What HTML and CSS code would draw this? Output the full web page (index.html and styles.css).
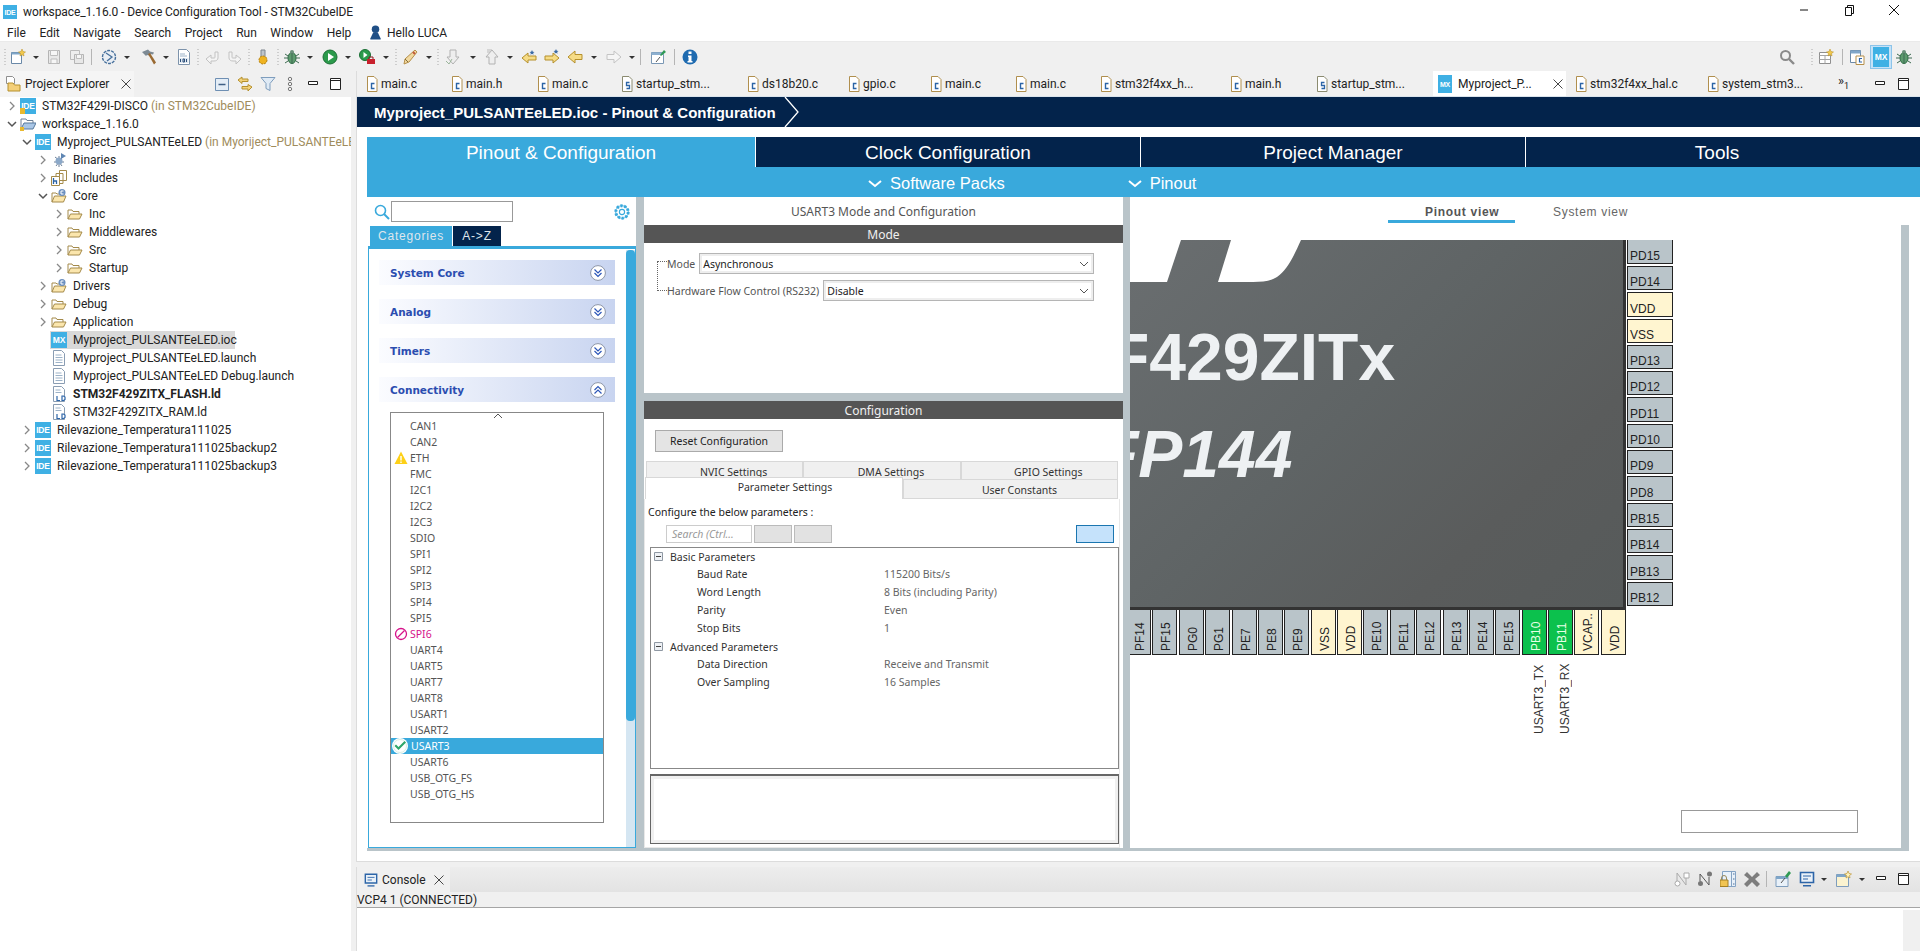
FILE: index.html
```html
<!DOCTYPE html>
<html lang="en">
<head>
    <meta charset="UTF-8">
    <title>workspace_1.16.0 - Device Configuration Tool - STM32CubeIDE</title>
    <link rel="stylesheet" href="styles.css">
</head>
<body>
<svg class="defs" width="0" height="0">
    <symbol id="grip" viewBox="0 0 16 16"><path d="M8 0v16" stroke="#aaa" stroke-dasharray="1 2" fill="none"/></symbol>
    <symbol id="sep" viewBox="0 0 16 16"><path d="M8.5 -2v20" stroke="#b5b5b5" fill="none"/></symbol>
    <symbol id="dd" viewBox="0 0 16 16"><path d="M5 7h6l-3 3z" fill="#333"/></symbol>
    <symbol id="new" viewBox="0 0 16 16"><path d="M1.5 3.5h10v11h-10z" fill="#fff" stroke="#6a89a8"/><path d="M1.5 3.5h10v2h-10z" fill="#7fa6c9"/><path d="M12 0l1 2.500 2.500.5-2 1.500.5 2.500-2-1.300-2 1.300.5-2.500-2-1.500 2.500-.5z" fill="#f2c94c" stroke="#b58a1f" stroke-width=".5"/></symbol>
    <symbol id="save" viewBox="0 0 16 16"><path d="M2.500 1.500h11v13h-11z" fill="#e8e8e8" stroke="#b4b4b4"/><path d="M4.500 1.500h7v5h-7zM5 10h6v4.500h-6z" fill="#f6f6f6" stroke="#bdbdbd"/></symbol>
    <symbol id="saveall" viewBox="0 0 16 16"><path d="M1.500 1.500h9v9h-9z" fill="#eee" stroke="#bbb"/><path d="M5.500 5.500h9v9h-9z" fill="#e8e8e8" stroke="#b4b4b4"/><path d="M7.500 5.500h5v4h-5z" fill="#f6f6f6" stroke="#bdbdbd"/></symbol>
    <symbol id="build" viewBox="0 0 16 16"><circle cx="8" cy="8" r="6.500" fill="#e9eef4" stroke="#47709c" stroke-width="1.400" stroke-dasharray="3 1"/><path d="M5 4l6 4-5 4" fill="none" stroke="#47709c" stroke-width="1.300"/></symbol>
    <symbol id="hammer" viewBox="0 0 16 16"><path d="M1 3l6-2.500 2 2 4 1-1 2-3-.5-1 1.500-2-.5-1 1z" fill="#7d8a94"/><path d="M7 5l2-1 6 9.500-2 2z" fill="#9a6a32"/></symbol>
    <symbol id="bin" viewBox="0 0 16 16"><path d="M2.500 .5h8l3 3v12h-11z" fill="#fff" stroke="#7d93ab"/><path d="M4 5h5M4 7h7" stroke="#9cb2c8"/><path d="M3.500 9h9v5h-9z" fill="#dfe8f1"/><path d="M4.500 10v3M7 10v3h1.500v-3zM10.500 10v3" stroke="#2d4f7a" fill="none"/></symbol>
    <symbol id="undo" viewBox="0 0 16 16"><path d="M13 3v6c0 2-2 3-4 3H6v3L1 10l5-4v3h3c1 0 1-.5 1-1V3z" fill="#f4f4f4" stroke="#c2c2c2"/></symbol>
    <symbol id="redo" viewBox="0 0 16 16"><path d="M3 3v6c0 2 2 3 4 3h3v3l5-5-5-4v3H7c-1 0-1-.5-1-1V3z" fill="#f4f4f4" stroke="#c2c2c2"/></symbol>
    <symbol id="pin" viewBox="0 0 16 16"><path d="M6 1h4v7H6z" fill="#bfc5cb" stroke="#7c858d"/><circle cx="8" cy="11" r="4" fill="#efb320" stroke="#b07e12" stroke-dasharray="2 1"/></symbol>
    <symbol id="bug" viewBox="0 0 16 16"><ellipse cx="8" cy="9" rx="4" ry="5.500" fill="#5d9a6e" stroke="#2f6b45"/><circle cx="8" cy="3" r="2" fill="#6a8f7a"/><path d="M1 5l3 2M15 5l-3 2M0 9h4M16 9h-4M1 14l3-2M15 14l-3-2M8 4v10" stroke="#3e6b52" fill="none"/></symbol>
    <symbol id="run" viewBox="0 0 16 16"><circle cx="8" cy="8" r="7" fill="#2b9a4b" stroke="#1b6f35"/><path d="M6 4l6 4-6 4z" fill="#fff"/></symbol>
    <symbol id="runext" viewBox="0 0 16 16"><circle cx="6" cy="6" r="5.500" fill="#2b9a4b" stroke="#1b6f35"/><path d="M4.500 3l4 3-4 3z" fill="#fff"/><path d="M8 10h8v5H8z" fill="#c8202c"/><path d="M10 10V8h4v2" fill="none" stroke="#8b1a22"/></symbol>
    <symbol id="pen" viewBox="0 0 16 16"><path d="M13 1l2 2-8 10-5 2 1-5z" fill="#f2d9a0" stroke="#b58f4a"/><path d="M3 10l3 3" stroke="#7f6a3a"/><path d="M11 3l2 2" stroke="#c25a3c" stroke-width="2"/></symbol>
    <symbol id="down" viewBox="0 0 16 16"><path d="M5 1h6v7h3l-6 7-6-7h3z" fill="#eee" stroke="#b2b2b2"/><path d="M1 12l3 3 3-5" fill="none" stroke="#9bb59b"/></symbol>
    <symbol id="up" viewBox="0 0 16 16"><path d="M8 1l6 7h-3v7H5V8H2z" fill="#eee" stroke="#b2b2b2"/><path d="M3 1h5M3 3h3" stroke="#bbb"/></symbol>
    <symbol id="starl" viewBox="0 0 16 16"><path d="M1 9l6-5v3h8v4H7v3z" fill="#f6dc86" stroke="#b5902d"/><path d="M11 1l.8 1.700 1.700.3-1.300 1 .3 1.700-1.500-.9-1.500.9.300-1.700-1.300-1 1.700-.3z" fill="#3a6aa5"/></symbol>
    <symbol id="starr" viewBox="0 0 16 16"><path d="M15 9l-6-5v3H1v4h8v3z" fill="#f6dc86" stroke="#b5902d"/><path d="M12 0l.8 1.700 1.700.3-1.300 1 .3 1.700-1.500-.9-1.500.9.300-1.700-1.300-1 1.700-.3z" fill="#3a6aa5"/></symbol>
    <symbol id="left" viewBox="0 0 16 16"><path d="M1 8l7-6v3.500h7v5H8V14z" fill="#f6dc86" stroke="#b5902d"/></symbol>
    <symbol id="right" viewBox="0 0 16 16"><path d="M15 8L8 2v3.500H1v5h7V14z" fill="#f5f5f5" stroke="#c4c4c4"/></symbol>
    <symbol id="note" viewBox="0 0 16 16"><path d="M1.500 3.500h12v11h-12z" fill="#fff" stroke="#7b98b5"/><path d="M1.500 3.500h12v2.500h-12z" fill="#8db0d0"/><path d="M10 6l4-5 2 2-5 4z" fill="#2f9a54"/><path d="M6 13l4-5" stroke="#555"/></symbol>
    <symbol id="info" viewBox="0 0 16 16"><circle cx="8" cy="8" r="7.500" fill="#1f6bb0"/><path d="M6.500 2.500h3v2.500h-3zM6 6.500h3.500V12h1v1.500h-5V12h1V8H6z" fill="#fff"/></symbol>
    <symbol id="search" viewBox="0 0 16 16"><circle cx="6.500" cy="6.500" r="4.500" fill="none" stroke="#8a8a8a" stroke-width="2"/><path d="M10 10l5 5" stroke="#8a8a8a" stroke-width="2.400"/></symbol>
    <symbol id="persp" viewBox="0 0 16 16"><path d="M1.500 3.500h11v11h-11z" fill="#fff" stroke="#8f8f8f"/><path d="M1.500 6.500h11M1.500 10.500h11M7 6.500v8" stroke="#a5a5a5"/><path d="M12 0l1 2.500 2.500.5-2 1.500.5 2.500-2-1.300-2 1.300.5-2.500-2-1.500 2.500-.5z" fill="#f2c94c" stroke="#b58a1f" stroke-width=".5"/></symbol>
    <symbol id="cpersp" viewBox="0 0 16 16"><path d="M1.500 1.500h10v12h-10z" fill="#fff" stroke="#6d8aa8"/><path d="M1.500 1.500h10v3h-10z" fill="#7fa6c9"/><path d="M7 7h8v8.500H7z" fill="#fff" stroke="#b58f4a"/><path d="M13 9.500h-2.500v3.500H13" fill="none" stroke="#2d65a8" stroke-width="1.200"/></symbol>
    <symbol id="cfile" viewBox="0 0 16 16"><path d="M3.500 .5h6.500l3 3v12h-9.500z" fill="#fff" stroke="#b08f4e"/><path d="M10.500 7.500h-3v5h3" fill="none" stroke="#2b64a6" stroke-width="1.400"/></symbol>
    <symbol id="sfile" viewBox="0 0 16 16"><path d="M3.500 .5h6.500l3 3v12h-9.500z" fill="#fff" stroke="#8b8b70"/><path d="M10.500 6.500h-3v3h3v3h-3" fill="none" stroke="#2b64a6" stroke-width="1.300"/></symbol>
    <symbol id="close" viewBox="0 0 16 16"><path d="M2 2l12 12M14 2L2 14" stroke="#333" stroke-width="1.200" fill="none"/></symbol>
    <symbol id="collapse" viewBox="0 0 16 16"><path d="M1.500 2.500h13v12h-13z" fill="#e4edf6" stroke="#6e8fb3"/><path d="M4.500 8.500h7" stroke="#3f5f85" stroke-width="1.500"/></symbol>
    <symbol id="sync" viewBox="0 0 16 16"><path d="M1 4l4-3v2h6v2.500H5v2z M15 11l-4 4v-2H5v-2.500h6v-2z" fill="#f3d27a" stroke="#b5902d"/></symbol>
    <symbol id="filter" viewBox="0 0 16 16"><path d="M1 1.500h14l-5 6v7l-4-2v-5z" fill="#dfeaf5" stroke="#7e9dbd"/></symbol>
    <symbol id="dots" viewBox="0 0 16 16"><circle cx="8" cy="3" r="1.700" fill="none" stroke="#777"/><circle cx="8" cy="8" r="1.700" fill="none" stroke="#777"/><circle cx="8" cy="13" r="1.700" fill="none" stroke="#777"/></symbol>
    <symbol id="min" viewBox="0 0 16 16"><path d="M3.500 5.500h9v3h-9z" fill="#fff" stroke="#222"/></symbol>
    <symbol id="max" viewBox="0 0 16 16"><path d="M2.500 2.500h10v11h-10z" fill="#fff" stroke="#222"/><path d="M2.500 4.500h10" stroke="#222"/></symbol>
    <symbol id="explorer" viewBox="0 0 16 16"><path d="M1.500 .5h6l2 2v5h-8z" fill="#fff" stroke="#8f8f8f"/><path d="M3 7h5l1.500 2h5.500v6H3z" fill="#f4cf78" stroke="#b5902d"/></symbol>
    <symbol id="fopen" viewBox="0 0 16 16"><path d="M1 13V4h4l1 1.500h6V8" fill="#fff" stroke="#a48a4a"/><path d="M1 13l2.500-5h11.500l-2.500 5z" fill="#fbe6ad" stroke="#a48a4a"/></symbol>
    <symbol id="fsrc" viewBox="0 0 16 16"><path d="M1 14V5h4l1 1h6v2" fill="#fff" stroke="#a48a4a"/><path d="M1 14l2.500-6h11.500l-2.500 6z" fill="#fbe6ad" stroke="#a48a4a"/><circle cx="11" cy="4.500" r="3.500" fill="#6b8fbf"/><path d="M12.500 3h-2.500v3h2.500" fill="none" stroke="#fff"/></symbol>
    <symbol id="fwork" viewBox="0 0 16 16"><path d="M1 13V3h5l1 1.500h6V7" fill="#fff" stroke="#6c7f96"/><path d="M1 13l3-6h12l-3 6z" fill="#a9c6e6" stroke="#56789c"/><path d="M0 11h4v4H0z" fill="#e9b92e"/></symbol>
    <symbol id="binaries" viewBox="0 0 16 16"><path d="M4 5l4 3 4-3M3 10h10M5 14l3-4 3 4M8 4v11" stroke="#6c7f96" fill="none"/><circle cx="8" cy="9" r="3.500" fill="#8ba8c8"/><path d="M10 1l5 3-5 3z" fill="#5f86b3"/></symbol>
    <symbol id="includes" viewBox="0 0 16 16"><path d="M8.500 .5h7v10h-7zM5 3.500h7v10H5z" fill="#fff" stroke="#a48a4a"/><path d="M.5 6.500h8v9h-8z" fill="#fff" stroke="#a48a4a"/><path d="M2.500 8v6M2.500 11h3v3" fill="none" stroke="#2b64a6" stroke-width="1.300"/></symbol>
    <symbol id="doc" viewBox="0 0 16 16"><path d="M2.500 .5h8l3 3v12h-11z" fill="#fff" stroke="#8a9db3"/><path d="M4.500 5h6M4.500 7.500h7M4.500 10h7M4.500 12.500h7" stroke="#9cb2c8"/></symbol>
    <symbol id="ldfile" viewBox="0 0 16 16"><path d="M2.500 .5h8l3 3v12h-11z" fill="#fff" stroke="#8a9db3"/><path d="M4.500 4h5M4.500 6.500h6" stroke="#9cb2c8"/><path d="M6 10v4.500h3M11 10h1.500l1.500 1v2.500l-1.500 1H11z" fill="#fff" stroke="#2d65a8" stroke-width="1.200"/></symbol>
    <symbol id="user" viewBox="0 0 16 16"><circle cx="8" cy="4.500" r="4" fill="#1f4f86"/><path d="M5.500 8h5l3 6.500v1h-11v-1z" fill="#1f4f86"/></symbol>
    <symbol id="console" viewBox="0 0 16 16"><path d="M1.500 1.500h13v10h-13z" fill="#eaf1f8" stroke="#2d65a8" stroke-width="1.600"/><path d="M4 5h8M4 8h5" stroke="#2d65a8"/><path d="M4 14h8v1.500H4z" fill="#2d65a8"/></symbol>
    <symbol id="link1" viewBox="0 0 16 16"><circle cx="3.500" cy="12.500" r="2.500" fill="#fff" stroke="#aaa"/><path d="M10 2h5v5h-5z" fill="#fff" stroke="#aaa"/><path d="M3 10V2l9 12V7" stroke="#aaa" fill="none"/></symbol>
    <symbol id="link2" viewBox="0 0 16 16"><circle cx="3.500" cy="12.500" r="2.500" fill="#777"/><circle cx="12.500" cy="3" r="2.500" fill="#777"/><path d="M3 10V3l9 11V6" stroke="#555" fill="none"/></symbol>
    <symbol id="lock" viewBox="0 0 16 16"><path d="M2.500 .5h13v15h-13z" fill="#e9f1f9" stroke="#84a3c4"/><path d="M11.500 .5v15" stroke="#84a3c4"/><path d="M13 3h1.500M13 8h1.500M13 13h1.500" stroke="#4b6f98"/><path d="M0 9h8v6.500H0z" fill="#f1c452" stroke="#a47f22"/><path d="M1.500 9V7a2.500 2.500 0 0 1 5 0v2" fill="none" stroke="#9a8a5a"/></symbol>
    <symbol id="xbig" viewBox="0 0 16 16"><path d="M3 1l5 5 5-5 3 3-5 4 5 5-3 3-5-5-5 5-3-3 5-5-5-4z" fill="#7d7d7d"/></symbol>
    <symbol id="pinc" viewBox="0 0 16 16"><path d="M1 5.500h12v10H1z" fill="#e9f1f9" stroke="#7e9dbd"/><path d="M1 5.500h12v2.500H1z" fill="#7fa6c9"/><path d="M10 5l4-5 2 2-4 5z" fill="#2f9a54"/><path d="M6 12l4-5" stroke="#555"/></symbol>
    <symbol id="newc" viewBox="0 0 16 16"><path d="M.5 3.500h12v12H.5z" fill="#fbf3d0" stroke="#7e9dbd"/><path d="M.5 3.500h12v2.500H.5z" fill="#7fa6c9"/><path d="M12 0l1 2.500 2.500.5-2 1.500.5 2.500-2-1.300-2 1.300.5-2.500-2-1.500 2.500-.5z" fill="#fff2b8" stroke="#b58a1f" stroke-width=".6"/></symbol>
    <symbol id="closed" viewBox="0 0 10 10"><path d="M3 1l4 4-4 4" fill="none" stroke="#888" stroke-width="1.300"/></symbol>
    <symbol id="open" viewBox="0 0 10 10"><path d="M1 3l4 4 4-4" fill="none" stroke="#555" stroke-width="1.500"/></symbol>
    <symbol id="acc-down" viewBox="0 0 16 16"><circle cx="8" cy="8" r="7.400" fill="#fff" stroke="#8d96a8"/><path d="M4.500 4.500L8 8l3.500-3.500M4.500 8L8 11.500 11.500 8" fill="none" stroke="#2c56b8" stroke-width="1.200"/></symbol>
    <symbol id="acc-up" viewBox="0 0 16 16"><circle cx="8" cy="8" r="7.400" fill="#fff" stroke="#8d96a8"/><path d="M4.500 8L8 4.500 11.500 8M4.500 11.500L8 8l3.500 3.500" fill="none" stroke="#2c56b8" stroke-width="1.200"/></symbol>
    <symbol id="warn" viewBox="0 0 14 14"><path d="M7 .5l6.500 12.500H.5z" fill="#fdd017"/><path d="M7 5v4.500M7 10.500v1.500" stroke="#fff" stroke-width="1.400"/></symbol>
    <symbol id="forbid" viewBox="0 0 14 14"><circle cx="7" cy="7" r="5.500" fill="none" stroke="#d6128a" stroke-width="1.300"/><path d="M3.500 10.500l7-7" stroke="#d6128a" stroke-width="1.300"/></symbol>
    <symbol id="check" viewBox="0 0 16 16"><circle cx="8" cy="8" r="8" fill="#fff"/><circle cx="8" cy="8" r="6.500" fill="#fff" stroke="#d8efe2"/><path d="M2.500 8l4 4 7.500-7.500-1.500-1.500-6 6-2.500-2.500z" fill="#2ea66a"/></symbol>
    <symbol id="gear" viewBox="0 0 16 16"><circle cx="8" cy="8" r="5.500" fill="none" stroke="#39a9dc" stroke-width="2.600" stroke-dasharray="2 1.400"/><circle cx="8" cy="8" r="5.600" fill="none" stroke="#39a9dc" stroke-width=".8"/><circle cx="8" cy="8" r="2.300" fill="none" stroke="#39a9dc"/></symbol>
    <symbol id="magnifier" viewBox="0 0 16 16"><circle cx="6.500" cy="6.500" r="5" fill="none" stroke="#39a9dc" stroke-width="1.600"/><path d="M10 10l5 5" stroke="#39a9dc" stroke-width="2"/></symbol>
    <symbol id="chev-down" viewBox="0 0 14 10"><path d="M1 2l6 5 6-5" fill="none" stroke="#fff" stroke-width="2"/></symbol>
    <symbol id="select-arrow" viewBox="0 0 10 10"><path d="M1 3l4 4 4-4" fill="none" stroke="#555"/></symbol>
    <symbol id="minus-box" viewBox="0 0 10 10"><path d="M.5 .5h8v8h-8z" fill="#eef1f5" stroke="#8f98a3"/><path d="M2 4.500h5" stroke="#444"/></symbol>
</svg>

<div class="titlebar">
    <span class="badge">IDE</span>
    <span class="title-text">workspace_1.16.0 - Device Configuration Tool - STM32CubeIDE</span>
    <div class="window-btns">
        <svg width="12" height="12" viewBox="0 0 12 12"><path d="M2 6h8" stroke="#111"/></svg>
        <svg width="12" height="12" viewBox="0 0 12 12"><path d="M2.500 3.500h6v8h-6zM4.500 3.500v-2h6v8h-2" fill="none" stroke="#111"/></svg>
        <svg width="12" height="12" viewBox="0 0 12 12"><path d="M1 1l10 10M11 1L1 11" stroke="#111" fill="none"/></svg>
    </div>
</div>

<div class="menubar">
    <span>File</span><span>Edit</span><span>Navigate</span><span>Search</span><span>Project</span><span>Run</span><span>Window</span><span>Help</span>
    <span class="hello"><svg width="15" height="15"><use href="#user"/></svg>Hello LUCA</span>
</div>

<div class="toolbar">
    <div class="tools">
        <svg><use href="#grip"/></svg><svg><use href="#new"/></svg><svg><use href="#dd"/></svg><svg><use href="#save"/></svg><svg><use href="#saveall"/></svg><svg><use href="#sep"/></svg>
        <svg><use href="#build"/></svg><svg><use href="#dd"/></svg><svg><use href="#hammer"/></svg><svg><use href="#dd"/></svg><svg><use href="#bin"/></svg><svg><use href="#grip"/></svg>
        <svg><use href="#undo"/></svg><svg><use href="#redo"/></svg><svg><use href="#grip"/></svg><svg><use href="#pin"/></svg><svg><use href="#grip"/></svg>
        <svg><use href="#bug"/></svg><svg><use href="#dd"/></svg><svg><use href="#run"/></svg><svg><use href="#dd"/></svg><svg><use href="#runext"/></svg><svg><use href="#dd"/></svg><svg><use href="#grip"/></svg>
        <svg><use href="#pen"/></svg><svg><use href="#dd"/></svg><svg><use href="#grip"/></svg><svg><use href="#down"/></svg><svg><use href="#dd"/></svg><svg><use href="#up"/></svg><svg><use href="#dd"/></svg>
        <svg><use href="#starl"/></svg><svg><use href="#starr"/></svg><svg><use href="#left"/></svg><svg><use href="#dd"/></svg><svg><use href="#right"/></svg><svg><use href="#dd"/></svg><svg><use href="#sep"/></svg>
        <svg><use href="#note"/></svg><svg><use href="#sep"/></svg><svg><use href="#info"/></svg>
    </div>
    <div class="tools-right">
        <svg class="r-search"><use href="#search"/></svg>
        <svg class="r-grip"><use href="#grip"/></svg>
        <svg class="r-persp"><use href="#persp"/></svg>
        <svg class="r-sep"><use href="#sep"/></svg>
        <svg class="r-cpersp"><use href="#cpersp"/></svg>
        <span class="mx-active"><span class="badge">MX</span></span>
        <svg class="r-bug"><use href="#bug"/></svg>
    </div>
</div>

<div class="workbench">
    <div class="left-panel">
        <div class="view-bar">
            <div class="view-tab explorer-tab">
                <svg width="16" height="16"><use href="#explorer"/></svg>
                <span>Project Explorer</span>
                <svg class="tab-x" width="12" height="12"><use href="#close"/></svg>
            </div>
            <div class="view-actions">
                <svg width="16" height="16"><use href="#collapse"/></svg>
                <svg width="16" height="16"><use href="#sync"/></svg>
                <svg width="16" height="16"><use href="#filter"/></svg>
                <svg width="16" height="16"><use href="#dots"/></svg>
                <svg width="16" height="16"><use href="#min"/></svg>
                <svg width="16" height="16"><use href="#max"/></svg>
            </div>
        </div>
        <div class="tree">
            <div class="row lv0"><svg class="arrow"><use href="#closed"/></svg><span class="badge warned">IDE</span><span class="name">STM32F429I-DISCO <em>(in STM32CubeIDE)</em></span></div>
            <div class="row lv0"><svg class="arrow"><use href="#open"/></svg><svg class="ico"><use href="#fwork"/></svg><span class="name">workspace_1.16.0</span></div>
            <div class="row lv1"><svg class="arrow"><use href="#open"/></svg><span class="badge">IDE</span><span class="name">Myproject_PULSANTEeLED <em>(in Myoriject_PULSANTEeLED)</em></span></div>
            <div class="row lv2"><svg class="arrow"><use href="#closed"/></svg><svg class="ico"><use href="#binaries"/></svg><span class="name">Binaries</span></div>
            <div class="row lv2"><svg class="arrow"><use href="#closed"/></svg><svg class="ico"><use href="#includes"/></svg><span class="name">Includes</span></div>
            <div class="row lv2"><svg class="arrow"><use href="#open"/></svg><svg class="ico"><use href="#fsrc"/></svg><span class="name">Core</span></div>
            <div class="row lv3"><svg class="arrow"><use href="#closed"/></svg><svg class="ico"><use href="#fopen"/></svg><span class="name">Inc</span></div>
            <div class="row lv3"><svg class="arrow"><use href="#closed"/></svg><svg class="ico"><use href="#fopen"/></svg><span class="name">Middlewares</span></div>
            <div class="row lv3"><svg class="arrow"><use href="#closed"/></svg><svg class="ico"><use href="#fopen"/></svg><span class="name">Src</span></div>
            <div class="row lv3"><svg class="arrow"><use href="#closed"/></svg><svg class="ico"><use href="#fopen"/></svg><span class="name">Startup</span></div>
            <div class="row lv2"><svg class="arrow"><use href="#closed"/></svg><svg class="ico"><use href="#fsrc"/></svg><span class="name">Drivers</span></div>
            <div class="row lv2"><svg class="arrow"><use href="#closed"/></svg><svg class="ico"><use href="#fopen"/></svg><span class="name">Debug</span></div>
            <div class="row lv2"><svg class="arrow"><use href="#closed"/></svg><svg class="ico"><use href="#fopen"/></svg><span class="name">Application</span></div>
            <div class="row lv2 selected"><span class="arrow"></span><span class="badge">MX</span><span class="name">Myproject_PULSANTEeLED.ioc</span></div>
            <div class="row lv2"><span class="arrow"></span><svg class="ico"><use href="#doc"/></svg><span class="name">Myproject_PULSANTEeLED.launch</span></div>
            <div class="row lv2"><span class="arrow"></span><svg class="ico"><use href="#doc"/></svg><span class="name">Myproject_PULSANTEeLED Debug.launch</span></div>
            <div class="row lv2"><span class="arrow"></span><svg class="ico"><use href="#ldfile"/></svg><span class="name"><b>STM32F429ZITX_FLASH.ld</b></span></div>
            <div class="row lv2"><span class="arrow"></span><svg class="ico"><use href="#ldfile"/></svg><span class="name">STM32F429ZITX_RAM.ld</span></div>
            <div class="row lv1"><svg class="arrow"><use href="#closed"/></svg><span class="badge">IDE</span><span class="name">Rilevazione_Temperatura111025</span></div>
            <div class="row lv1"><svg class="arrow"><use href="#closed"/></svg><span class="badge">IDE</span><span class="name">Rilevazione_Temperatura111025backup2</span></div>
            <div class="row lv1"><svg class="arrow"><use href="#closed"/></svg><span class="badge">IDE</span><span class="name">Rilevazione_Temperatura111025backup3</span></div>
        </div>
    </div>

    <div class="right-stack">
        <div class="editor">
            <div class="editor-tabs">
                <div class="etab"><svg><use href="#cfile"/></svg>main.c</div>
                <div class="etab"><svg><use href="#cfile"/></svg>main.h</div>
                <div class="etab"><svg><use href="#cfile"/></svg>main.c</div>
                <div class="etab"><svg><use href="#sfile"/></svg>startup_stm...</div>
                <div class="etab"><svg><use href="#cfile"/></svg>ds18b20.c</div>
                <div class="etab"><svg><use href="#cfile"/></svg>gpio.c</div>
                <div class="etab"><svg><use href="#cfile"/></svg>main.c</div>
                <div class="etab"><svg><use href="#cfile"/></svg>main.c</div>
                <div class="etab"><svg><use href="#cfile"/></svg>stm32f4xx_h...</div>
                <div class="etab"><svg><use href="#cfile"/></svg>main.h</div>
                <div class="etab"><svg><use href="#sfile"/></svg>startup_stm...</div>
                <div class="etab active"><span class="badge">MX</span>Myproject_P...<svg class="tab-x" width="12" height="12"><use href="#close"/></svg></div>
                <div class="etab"><svg><use href="#cfile"/></svg>stm32f4xx_hal.c</div>
                <div class="etab"><svg><use href="#cfile"/></svg>system_stm3...</div>
                <div class="etab-more"><span class="more">»<sub>1</sub></span><svg width="16" height="16"><use href="#min"/></svg><svg width="16" height="16"><use href="#max"/></svg></div>
            </div>

            <div class="mx">
                <div class="crumb">
                    <span>Myproject_PULSANTEeLED.ioc - Pinout &amp; Configuration</span>
                    <svg width="16" height="30" viewBox="0 0 16 30"><path d="M1 0l13 15L1 30" fill="none" stroke="#fff" stroke-width="1.300"/></svg>
                </div>

                <div class="main-tabs">
                    <div class="main-tab active">Pinout &amp; Configuration</div>
                    <div class="main-tab">Clock Configuration</div>
                    <div class="main-tab">Project Manager</div>
                    <div class="main-tab">Tools</div>
                </div>
                <div class="sub-tabs">
                    <span class="sub-packs"><svg width="14" height="10"><use href="#chev-down"/></svg>Software Packs</span>
                    <span class="sub-pinout"><svg width="14" height="10"><use href="#chev-down"/></svg>Pinout</span>
                </div>

                <div class="mx-body">
                    <div class="cat-panel">
                        <div class="cat-search">
                            <svg width="16" height="16"><use href="#magnifier"/></svg>
                            <div class="cat-input"></div>
                            <svg class="cat-gear" width="18" height="18"><use href="#gear"/></svg>
                        </div>
                        <div class="cat-tabs">
                            <div class="cat-tab active">Categories</div>
                            <div class="cat-tab">A-&gt;Z</div>
                        </div>
                        <div class="cat-box">
                            <div class="cat-scroll"><div class="cat-thumb"></div></div>
                            <div class="acc"><span>System Core</span><svg width="16" height="16"><use href="#acc-down"/></svg></div>
                            <div class="acc"><span>Analog</span><svg width="16" height="16"><use href="#acc-down"/></svg></div>
                            <div class="acc"><span>Timers</span><svg width="16" height="16"><use href="#acc-down"/></svg></div>
                            <div class="acc"><span>Connectivity</span><svg width="16" height="16"><use href="#acc-up"/></svg></div>
                            <div class="ip-list">
                                <svg class="ip-up" width="10" height="6" viewBox="0 0 10 6"><path d="M1 5l4-4 4 4" fill="none" stroke="#555"/></svg>
                                <div class="ip">CAN1</div>
                                <div class="ip">CAN2</div>
                                <div class="ip"><svg width="14" height="14"><use href="#warn"/></svg>ETH</div>
                                <div class="ip">FMC</div>
                                <div class="ip">I2C1</div>
                                <div class="ip">I2C2</div>
                                <div class="ip">I2C3</div>
                                <div class="ip">SDIO</div>
                                <div class="ip">SPI1</div>
                                <div class="ip">SPI2</div>
                                <div class="ip">SPI3</div>
                                <div class="ip">SPI4</div>
                                <div class="ip">SPI5</div>
                                <div class="ip blocked"><svg width="14" height="14"><use href="#forbid"/></svg>SPI6</div>
                                <div class="ip">UART4</div>
                                <div class="ip">UART5</div>
                                <div class="ip">UART7</div>
                                <div class="ip">UART8</div>
                                <div class="ip">USART1</div>
                                <div class="ip">USART2</div>
                                <div class="ip current"><svg width="16" height="16"><use href="#check"/></svg>USART3</div>
                                <div class="ip">USART6</div>
                                <div class="ip">USB_OTG_FS</div>
                                <div class="ip">USB_OTG_HS</div>
                            </div>
                        </div>
                    </div>

                    <div class="mid-panel">
                        <div class="mode-section">
                            <div class="mid-title">USART3 Mode and Configuration</div>
                            <div class="dark-bar">Mode</div>
                            <div class="mode-form">
                                <div class="mode-row">
                                    <label>Mode</label>
                                    <div class="select"><span>Asynchronous</span><svg width="10" height="10"><use href="#select-arrow"/></svg></div>
                                </div>
                                <div class="mode-row">
                                    <label>Hardware Flow Control (RS232)</label>
                                    <div class="select"><span>Disable</span><svg width="10" height="10"><use href="#select-arrow"/></svg></div>
                                </div>
                            </div>
                        </div>
                        <div class="config-section">
                            <div class="dark-bar">Configuration</div>
                            <button class="reset-btn">Reset Configuration</button>
                            <div class="cfg-tabs">
                                <div class="cfg-row top">
                                    <div class="cfg-tab">NVIC Settings</div>
                                    <div class="cfg-tab">DMA Settings</div>
                                    <div class="cfg-tab">GPIO Settings</div>
                                </div>
                                <div class="cfg-row">
                                    <div class="cfg-tab current">Parameter Settings</div>
                                    <div class="cfg-tab user">User Constants</div>
                                </div>
                            </div>
                            <div class="cfg-body">
                                <div class="cfg-hint">Configure the below parameters :</div>
                                <div class="cfg-tools">
                                    <div class="cfg-search">Search (Ctrl...</div>
                                    <div class="cfg-btn"></div>
                                    <div class="cfg-btn"></div>
                                    <div class="cfg-btn on"></div>
                                </div>
                                <div class="params">
                                    <div class="group"><svg width="10" height="10"><use href="#minus-box"/></svg>Basic Parameters</div>
                                    <div class="param"><span>Baud Rate</span><span>115200 Bits/s</span></div>
                                    <div class="param"><span>Word Length</span><span>8 Bits (including Parity)</span></div>
                                    <div class="param"><span>Parity</span><span>Even</span></div>
                                    <div class="param"><span>Stop Bits</span><span>1</span></div>
                                    <div class="group"><svg width="10" height="10"><use href="#minus-box"/></svg>Advanced Parameters</div>
                                    <div class="param"><span>Data Direction</span><span>Receive and Transmit</span></div>
                                    <div class="param"><span>Over Sampling</span><span>16 Samples</span></div>
                                </div>
                                <div class="desc-box"></div>
                            </div>
                        </div>
                    </div>

                    <div class="pinout-panel">
                        <div class="view-switch">
                            <div class="switch-item on">Pinout view</div>
                            <div class="switch-item">System view</div>
                        </div>
                        <div class="pin-area">
                            <div class="chip-row">
                                <div class="chip">
                                    <svg class="chip-logo" width="180" height="44" viewBox="0 0 180 44"><path d="M0 0h51l-14 42H0zM101 0h70c-8 18-14 30-24 37-6 4-14 5-24 5H88z" fill="#fff"/></svg>
                                    <div class="chip-name">F429ZITx</div>
                                    <div class="chip-pkg">FP144</div>
                                </div>
                                <div class="pins-right">
                                    <div class="pin first">PD15</div>
                                    <div class="pin">PD14</div>
                                    <div class="pin power">VDD</div>
                                    <div class="pin power">VSS</div>
                                    <div class="pin">PD13</div>
                                    <div class="pin">PD12</div>
                                    <div class="pin">PD11</div>
                                    <div class="pin">PD10</div>
                                    <div class="pin">PD9</div>
                                    <div class="pin">PD8</div>
                                    <div class="pin">PB15</div>
                                    <div class="pin">PB14</div>
                                    <div class="pin">PB13</div>
                                    <div class="pin">PB12</div>
                                </div>
                            </div>
                            <div class="pins-bottom">
                                <div class="bpin first"><span>PF14</span></div>
                                <div class="bpin"><span>PF15</span></div>
                                <div class="bpin"><span>PG0</span></div>
                                <div class="bpin"><span>PG1</span></div>
                                <div class="bpin"><span>PE7</span></div>
                                <div class="bpin"><span>PE8</span></div>
                                <div class="bpin"><span>PE9</span></div>
                                <div class="bpin power"><span>VSS</span></div>
                                <div class="bpin power"><span>VDD</span></div>
                                <div class="bpin"><span>PE10</span></div>
                                <div class="bpin"><span>PE11</span></div>
                                <div class="bpin"><span>PE12</span></div>
                                <div class="bpin"><span>PE13</span></div>
                                <div class="bpin"><span>PE14</span></div>
                                <div class="bpin"><span>PE15</span></div>
                                <div class="bpin used"><span>PB10</span><i class="signal">USART3_TX</i></div>
                                <div class="bpin used"><span>PB11</span><i class="signal">USART3_RX</i></div>
                                <div class="bpin power"><span>VCAP..</span></div>
                                <div class="bpin power"><span>VDD</span></div>
                            </div>
                            <div class="zoom-box"></div>
                        </div>
                    </div>
                </div>
            </div>
        </div>

        <div class="console">
            <div class="console-bar">
                <div class="view-tab console-tab">
                    <svg width="14" height="14"><use href="#console"/></svg>
                    <span>Console</span>
                    <svg class="tab-x" width="12" height="12"><use href="#close"/></svg>
                </div>
                <div class="console-actions">
                    <svg><use href="#link1"/></svg><svg><use href="#link2"/></svg><svg><use href="#lock"/></svg><svg><use href="#xbig"/></svg><svg><use href="#sep"/></svg><svg><use href="#pinc"/></svg><svg><use href="#console"/></svg><svg><use href="#dd"/></svg><svg><use href="#newc"/></svg><svg><use href="#dd"/></svg><svg><use href="#min"/></svg><svg><use href="#max"/></svg>
                </div>
            </div>
            <div class="console-name">VCP4 1 (CONNECTED)</div>
            <div class="console-out"><div class="console-scroll"></div></div>
        </div>
    </div>
</div>
</body>
</html>
```

FILE: styles.css
```css
* {
    box-sizing: border-box;
}

html, body {
    height: 100%;
}

body {
    margin: 0;
    overflow: hidden;
    background-color: #fff;
    color: #222;
    font-family: Roboto, "Noto Sans", sans-serif;
    font-size: 12px;
}

.defs {
    position: absolute;
}

svg {
    display: block;
    flex: none;
}

.badge {
    display: flex;
    align-items: center;
    justify-content: center;
    flex: none;
    width: 16px;
    height: 16px;
    background-color: #3fb0e4;
    color: #fff;
    font-family: "Liberation Sans", sans-serif;
    font-size: 8.500px;
    font-weight: bold;
    letter-spacing: -.2px;
}

/* title + menu */

.titlebar {
    display: flex;
    align-items: center;
    height: 22px;
    padding: 2px 0 0 3px;
}

.title-text {
    margin-left: 6px;
    letter-spacing: -.1px;
}

.titlebar .badge {
    width: 14px;
    height: 14px;
    font-size: 7px;
}

.window-btns {
    display: flex;
    gap: 33px;
    margin-left: auto;
    margin-right: 20px;
    padding-bottom: 4px;
}

.menubar {
    display: flex;
    align-items: center;
    gap: 13.600px;
    height: 19px;
    padding: 2px 0 0 7px;
}

.hello {
    display: flex;
    align-items: center;
    gap: 4px;
    margin-left: 3px;
}

/* toolbar */

.toolbar {
    display: flex;
    align-items: center;
    height: 30px;
    background-color: #f0f0f0;
    border-top: 1px solid #eaeaea;
}

.tools {
    display: grid;
    grid-template-columns: 13px 18px 18px 23px 14px 18px 18px 22px 17px 18px 14px 15px 21px 15px 14px 15px 14px 18px 20px 18px 19px 19px 10px 14px 19px 9px 15px 20px 19px 18px 19px 23px 23px 19px 20px 18px 8px 18px 16px 16px 16px;
    padding-left: 5px;
}

.tools svg {
    width: 16px;
    height: 16px;
    margin-left: -8px;
    overflow: visible;
}

.tools-right {
    display: flex;
    align-items: center;
    margin-left: auto;
}

.tools-right svg {
    width: 16px;
    height: 16px;
}

.r-search {
    margin-right: 9px;
}

.r-grip {
    margin-right: -2px;
}

.r-sep {
    margin-right: -1px;
}

.r-cpersp {
    margin-right: 5px;
}

.mx-active {
    display: flex;
    align-items: center;
    justify-content: center;
    width: 22px;
    height: 24px;
    background-color: #c6e2f7;
    border: 1px solid #8cc4ea;
}

.mx-active .badge {
    width: 16px;
    height: 20px;
}

.r-bug {
    margin: 0 8px 0 4px;
}

/* workbench */

.workbench {
    display: flex;
    height: 880px;
    background-color: #f0f0f0;
}

.left-panel {
    flex: none;
    width: 351px;
    background-color: #fff;
}

.view-bar {
    display: flex;
    align-items: center;
    height: 26px;
    background-color: #f0f0f0;
}

.view-tab {
    display: flex;
    align-items: center;
    height: 100%;
}

.explorer-tab {
    width: 134px;
    padding-left: 5px;
    gap: 4px;
    background-color: #f5f5f5;
}

.tab-x {
    margin-left: 7px;
}

.view-actions {
    display: grid;
    grid-template-columns: repeat(6, 22.800px);
    margin-left: 80px;
}

.row {
    display: flex;
    align-items: center;
    height: 18px;
    white-space: nowrap;
    overflow: hidden;
}

.row.lv0 { padding-left: 7px; }
.row.lv1 { padding-left: 22px; }
.row.lv2 { padding-left: 38px; }
.row.lv3 { padding-left: 54px; }

.arrow {
    flex: none;
    width: 10px;
    height: 10px;
    margin-right: 3px;
}

.ico {
    width: 16px;
    height: 16px;
}

.name {
    margin-left: 6px;
}

.name em {
    font-style: normal;
    color: #a08c5c;
}

.badge.warned {
    position: relative;
}

.badge.warned::after {
    content: "";
    position: absolute;
    left: 0;
    bottom: 0;
    width: 5px;
    height: 6px;
    background-color: #e9b92e;
}

.row.selected {
    background: linear-gradient(to right, #fff 50px, #d9d9d9 50px, #d9d9d9 235px, #fff 235px);
}

/* right stack */

.right-stack {
    display: flex;
    flex-direction: column;
    flex: 1;
    min-width: 0;
    margin-left: 5px;
    gap: 5px;
}

.editor {
    height: 791px;
    background-color: #fff;
    border-left: 1px solid #dcdcdc;
    border-bottom: 1px solid #dcdcdc;
}

.editor-tabs {
    display: grid;
    grid-template-columns: 85px 86px 84px 126px 101px 82px 85px 85px 130px 86px 126px 133px 132px 130px 1fr;
    height: 26px;
    background-color: #f0f0f0;
    border-bottom: 1px solid #dbe4ec;
}

.etab {
    display: flex;
    align-items: center;
    gap: 1px;
    padding: 1px 0 0 8px;
    white-space: nowrap;
}

.etab svg {
    width: 16px;
    height: 16px;
    margin-left: -1px;
}

.etab.active {
    padding-left: 5px;
    gap: 6px;
    background-color: #fff;
}

.etab.active .badge {
    width: 14px;
    height: 18px;
    font-size: 7px;
}

.etab.active .tab-x {
    width: 12px;
    height: 12px;
    margin-left: 14px;
}

.etab-more {
    display: flex;
    align-items: center;
    padding-left: 10px;
}

.more {
    width: 34px;
    font-size: 13px;
    line-height: 12px;
}

.more sub {
    font-size: 9px;
}

.etab-more svg {
    margin-right: 8px;
}

/* mx editor */

.mx {
    display: flex;
    flex-direction: column;
    height: 764px;
}

.crumb {
    display: flex;
    align-items: center;
    gap: 8px;
    height: 30px;
    padding-left: 17px;
    background-color: #03234b;
    color: #fff;
    font-family: "Liberation Sans", sans-serif;
    font-size: 15px;
    font-weight: bold;
    flex: none;
}

.main-tabs {
    display: grid;
    grid-template-columns: 388px 385px 385px 1fr;
    height: 30px;
    margin: 10px 0 0 10px;
    flex: none;
}

.main-tab {
    display: flex;
    align-items: center;
    justify-content: center;
    padding-top: 2px;
    background-color: #03234b;
    border-left: 1px solid #fff;
    color: #fff;
    font-family: "Liberation Sans", sans-serif;
    font-size: 19px;
}

.main-tab:last-child {
    padding-right: 12px;
}

.main-tab.active {
    background-color: #39a9dc;
    border-left: 0;
}

.sub-tabs {
    display: flex;
    align-items: center;
    height: 30px;
    margin-left: 10px;
    padding: 3px 0 0 501px;
    background-color: #39a9dc;
    color: #fff;
    font-family: "Liberation Sans", sans-serif;
    font-size: 16.500px;
    flex: none;
}

.sub-packs,
.sub-pinout {
    display: flex;
    align-items: center;
    gap: 8px;
}

.sub-pinout {
    margin-left: 123px;
}

.mx-body {
    display: flex;
    height: 654px;
    margin-left: 10px;
    font-family: "Noto Sans", sans-serif;
    font-size: 10.500px;
}

/* categories */

.cat-panel {
    display: flex;
    flex-direction: column;
    flex: none;
    width: 277px;
    padding-right: 8px;
    padding-left: 1px;
    background: linear-gradient(to left, #b9c4c9 8px, #fff 8px);
    border-bottom: 3px solid #b9c4c9;
}

.cat-search {
    display: flex;
    align-items: center;
    gap: 3px;
    height: 29px;
    padding-left: 6px;
}

.cat-input {
    width: 122px;
    height: 21px;
    margin-left: -2px;
    background-color: #fff;
    border: 1px solid #999;
}

.cat-gear {
    margin-left: 97px;
}

.cat-tabs {
    display: flex;
    gap: 1px;
    height: 20px;
    margin-left: 2px;
}

.cat-tab {
    display: flex;
    align-items: center;
    justify-content: center;
    width: 48px;
    background-color: #03234b;
    color: #dfe6ec;
    font-family: "Liberation Sans", sans-serif;
    font-size: 12px;
    letter-spacing: .8px;
}

.cat-tab.active {
    width: 82px;
    background-color: #39a9dc;
}

.cat-box {
    position: relative;
    display: flex;
    flex-direction: column;
    flex: 1;
    padding: 11px 0 0 10px;
    gap: 14px;
    border: 1px solid #39a9dc;
    border-top-width: 3px;
}

.cat-scroll {
    position: absolute;
    top: 1px;
    right: 0;
    bottom: 0;
    width: 9px;
    background-color: #d5e6f2;
}

.cat-thumb {
    height: 471px;
    background-color: #39a9dc;
    border-radius: 4px;
}

.acc {
    display: flex;
    align-items: center;
    justify-content: space-between;
    width: 236px;
    height: 25px;
    padding: 0 9px 0 11px;
    background: linear-gradient(to right, #fbfcff, #c8d4f0);
    color: #2b4db0;
    font-family: "DejaVu Sans", sans-serif;
    font-size: 10.500px;
    font-weight: bold;
}

.ip-list {
    position: relative;
    width: 214px;
    height: 411px;
    margin: -4px 0 0 11px;
    padding-top: 5px;
    border: 1px solid #888;
    color: #555;
}

.ip-up {
    position: absolute;
    top: 0;
    left: 102px;
}

.ip {
    position: relative;
    height: 16px;
    padding-left: 19px;
    line-height: 17px;
}

.ip svg {
    position: absolute;
    left: 3px;
    top: 1px;
}

.ip.blocked {
    color: #d6128a;
}

.ip.current {
    background-color: #39a9dc;
    color: #fff;
    padding-left: 20px;
}

.ip.current svg {
    left: 1px;
    top: 0;
}

/* mode and config */

.mid-panel {
    display: flex;
    flex-direction: column;
    flex: none;
    width: 479px;
    color: #555;
}

.mode-section {
    height: 196px;
}

.mid-title {
    display: flex;
    align-items: center;
    justify-content: center;
    height: 28px;
    font-size: 12px;
}

.dark-bar {
    height: 18px;
    background-color: #555;
    color: #f0f0f0;
    font-size: 12px;
    line-height: 19px;
    text-align: center;
}

.mode-form {
    position: relative;
    display: flex;
    flex-direction: column;
    gap: 6px;
    padding: 10px 29px 0 23px;
}

.mode-form::before {
    content: "";
    position: absolute;
    left: 13px;
    top: 18px;
    width: 9px;
    height: 28px;
    border: 1px dotted #666;
    border-right: 0;
}

.mode-row {
    display: flex;
    align-items: center;
    gap: 4px;
    height: 21px;
}

.select {
    display: flex;
    align-items: center;
    justify-content: space-between;
    flex: 1;
    height: 21px;
    padding: 0 4px 0 3px;
    background-color: #fff;
    border: 1px solid #b5b5b5;
    box-shadow: inset 0 0 0 2px #eee;
    color: #222;
}

.config-section {
    display: flex;
    flex-direction: column;
    flex: 1;
    border-top: 8px solid #b9c4c9;
    border-bottom: 3px solid #b9c4c9;
}

.reset-btn {
    align-self: flex-start;
    width: 128px;
    height: 22px;
    margin: 11px 0 0 11px;
    padding: 0;
    background-color: #e4e4e4;
    border: 1px solid #aaa;
    color: #222;
    font-family: inherit;
    font-size: 10.500px;
}

.cfg-tabs {
    margin-top: 9px;
    color: #333;
}

.cfg-row {
    display: flex;
    height: 20px;
    padding: 0 5px 0 1px;
}

.cfg-row.top {
    height: 18px;
    padding-left: 2px;
    overflow: hidden;
}

.cfg-tab {
    flex: 1;
    padding-left: 18px;
    background-color: #f0f0f0;
    border: 1px solid #d8d8d8;
    border-bottom: 0;
    line-height: 20px;
    text-align: center;
}

.cfg-row .current {
    flex: none;
    width: 258px;
    height: 22px;
    margin-top: -2px;
    padding-left: 22px;
    background-color: #fff;
    line-height: 18px;
    position: relative;
}

.cfg-row .user {
    border-bottom: 1px solid #d8d8d8;
}

.cfg-body {
    display: flex;
    flex: 1;
    flex-direction: column;
    margin-right: 3px;
    padding: 6px 3px 0 3px;
    border: 1px solid #e8e8e8;
    border-top: 0;
    color: #333;
}

.cfg-hint {
    height: 15px;
    color: #222;
    line-height: 15px;
}

.cfg-tools {
    display: flex;
    gap: 2px;
    height: 18px;
    margin: 5px 2px 0 18px;
}

.cfg-search {
    width: 86px;
    padding-left: 5px;
    border: 1px solid #ccc;
    color: #999;
    font-style: italic;
    line-height: 16px;
    white-space: nowrap;
}

.cfg-btn {
    width: 38px;
    background-color: #e2e2e2;
    border: 1px solid #bbb;
}

.cfg-btn.on {
    margin-left: auto;
    background-color: #c5e2fb;
    border-color: #1b76b0;
}

.params {
    width: 469px;
    height: 222px;
    margin: 4px 0 0 2px;
    padding-bottom: 1px;
    border: 1px solid #888;
}

.group {
    display: flex;
    align-items: center;
    gap: 6px;
    height: 18px;
    padding-left: 3px;
    margin-top: 0;
    line-height: 16px;
}

.param {
    display: grid;
    grid-template-columns: 187px 1fr;
    height: 18px;
    padding-left: 46px;
    line-height: 16px;
}

.param span:last-child {
    color: #666;
}

.desc-box {
    width: 469px;
    height: 70px;
    margin: 5px 0 0 2px;
    background-color: #fff;
    border: 1px solid #666;
    border-top-width: 2px;
    box-shadow: inset 0 0 0 3px #f0f0f0;
}

/* pinout view */

.pinout-panel {
    position: relative;
    display: flex;
    flex-direction: column;
    flex: none;
    width: 786px;
    padding-left: 7px;
    background: linear-gradient(to right, #b9c4c9 7px, #fff 7px);
    border-bottom: 3px solid #b9c4c9;
}

.pinout-panel::after {
    content: "";
    position: absolute;
    top: 28px;
    right: 0;
    bottom: 0;
    width: 8px;
    background-color: #b9c4c9;
}

.view-switch {
    display: flex;
    height: 43px;
    padding: 6px 0 0 258px;
}

.switch-item {
    height: 20px;
    margin-left: 38px;
    color: #666;
    font-family: "Liberation Sans", sans-serif;
    font-size: 12px;
    letter-spacing: .7px;
    line-height: 18px;
}

.switch-item.on {
    width: 127px;
    margin-left: 0;
    padding-left: 37px;
    border-bottom: 3px solid #39a9dc;
    color: #555;
    font-weight: bold;
}

.pin-area {
    position: relative;
    flex: 1;
}

.chip-row {
    display: flex;
    height: 370px;
}

.chip {
    position: relative;
    width: 496px;
    overflow: hidden;
    background: linear-gradient(135deg, #6a6e70, #5f6465 45%, #5a5c5c 75%, #565a5a);
    border-right: 3px solid #333;
    border-bottom: 3px solid #333;
    color: #eef1f3;
    font-family: "Liberation Sans", sans-serif;
    font-size: 66px;
    font-weight: bold;
    line-height: 66px;
}

.chip-logo {
    position: absolute;
    top: 0;
    left: 0;
}

.chip-name,
.chip-pkg {
    position: absolute;
    white-space: nowrap;
}

.chip-name {
    top: 84px;
    left: -21px;
}

.chip-pkg {
    top: 181px;
    left: -32px;
    font-style: italic;
}

.pins-right {
    display: flex;
    flex-direction: column;
    gap: 2px;
    width: 46px;
    margin-left: 1px;
}

.pin {
    display: flex;
    align-items: flex-end;
    height: 24.300px;
    padding-left: 2px;
    background-color: #b9c4c9;
    border: 1px solid #222;
    color: #222;
    font-family: "Liberation Sans", sans-serif;
    font-size: 12px;
    line-height: 14px;
}

.pin.first {
    height: 24px;
    border-top: 0;
}

.pin.power,
.bpin.power {
    background-color: #fff5d0;
}

.pins-bottom {
    display: flex;
    justify-content: space-between;
    width: 496px;
    height: 45px;
}

.bpin {
    position: relative;
    display: flex;
    align-items: flex-start;
    justify-content: center;
    width: 25px;
    padding: 0 0 2px 3px;
    background-color: #b9c4c9;
    border: 1px solid #222;
    border-top: 0;
    color: #222;
    font-family: "Liberation Sans", sans-serif;
    font-size: 12px;
}

.bpin.first {
    width: 21px;
    padding-left: 0;
    border-left: 0;
}

.bpin span {
    height: 100%;
    padding-top: 1px;
    writing-mode: vertical-rl;
    transform: rotate(180deg);
    line-height: 20px;
    white-space: nowrap;
}

.bpin.used {
    background-color: #0cc14d;
    color: #e6ffe6;
}

.signal {
    position: absolute;
    top: 56px;
    left: 9px;
    height: 68px;
    writing-mode: vertical-rl;
    transform: rotate(180deg);
    color: #333;
    font-style: normal;
    line-height: 14px;
    white-space: nowrap;
}

.zoom-box {
    position: absolute;
    top: 570px;
    left: 551px;
    width: 177px;
    height: 23px;
    background-color: #fff;
    border: 1px solid #999;
}

/* console */

.console {
    display: flex;
    flex-direction: column;
    flex: 1;
    background-color: #fff;
    border-left: 1px solid #dcdcdc;
}

.console-bar {
    display: flex;
    justify-content: space-between;
    height: 25px;
    background: linear-gradient(#ededed, #e3e3e3);
}

.console-tab {
    width: 93px;
    padding: 1px 0 0 7px;
    gap: 4px;
    background-color: #f0f0f0;
}

.console-tab .tab-x {
    margin-left: 3px;
}

.console-actions {
    display: grid;
    grid-template-columns: 23px 23px 24px 14px 17px 24px 17px 20px 18px 19px 23px 16px;
    padding: 4px 8px 0 0;
}

.console-actions svg {
    width: 16px;
    height: 16px;
}

.console-name {
    height: 16px;
    background-color: #f0f0f0;
    border-bottom: 1px solid #a5a5a5;
    line-height: 17px;
}

.console-out {
    display: flex;
    flex: 1;
    justify-content: flex-end;
}

.console-scroll {
    width: 17px;
    margin-top: 2px;
    background-color: #f0f0f0;
}
```
